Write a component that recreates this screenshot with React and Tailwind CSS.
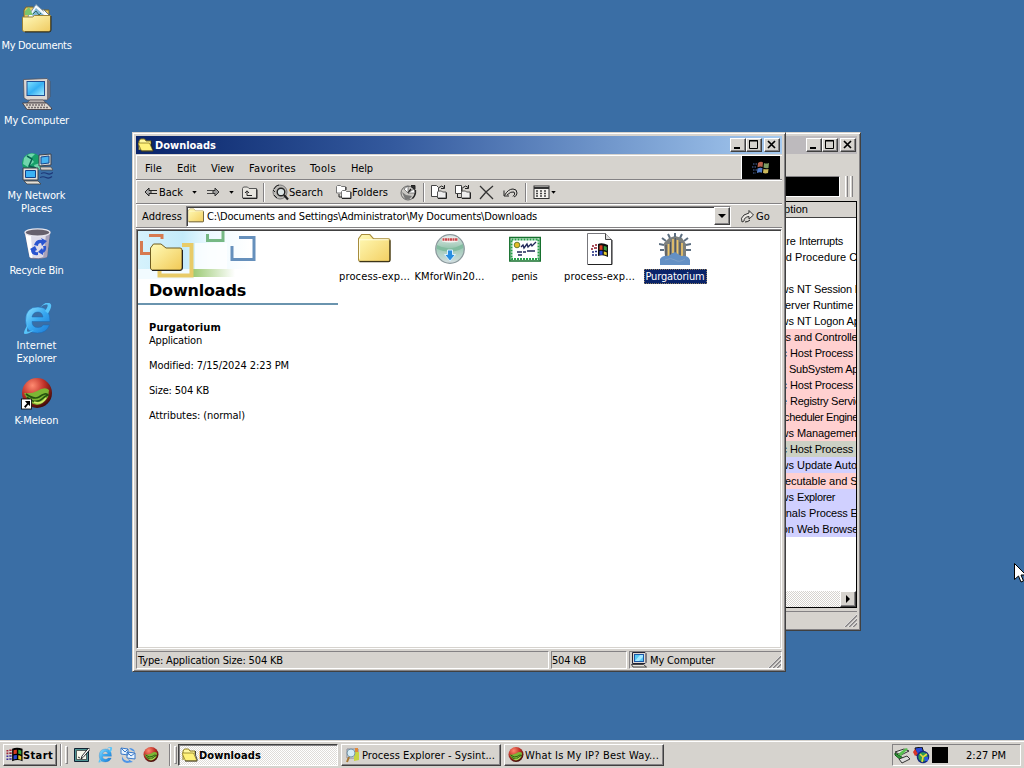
import React, { useLayoutEffect, useRef, useState } from "react";

/* Text run spaced so that it fills a given width, like a bitmap UI font. */
function Fit({ w, children, className = "" }) {
  const ref = useRef(null);
  const [ls, setLs] = useState(0);
  useLayoutEffect(() => {
    const natural = ref.current.getBoundingClientRect().width;
    setLs((w - natural) / children.length);
  }, []);
  return (
    <span ref={ref} className={"inline-block w-fit shrink-0 whitespace-pre " + className} style={{ letterSpacing: ls + "px" }}>
      {children}
    </span>
  );
}

const raised = "border border-t-white border-l-white border-r-[#404040] border-b-[#404040] bg-[#d6d3ce] shadow-[inset_-1px_-1px_0_#848284]";
const sunken = "border border-t-[#848284] border-l-[#848284] border-r-white border-b-white";

/* ---------- icons ---------- */
function Folder({ className }) {
  return (
    <svg viewBox="0 0 32 32" className={className}>
      <defs>
        <linearGradient id="fold" x1="0" y1="0" x2="1" y2="1">
          <stop offset="0" stopColor="#fffbb8" />
          <stop offset="1" stopColor="#f3cf62" />
        </linearGradient>
      </defs>
      <path d="M.5 26V5.500l3-4h8l3.500 4h14.500a1.500 1.500 0 0 1 1.500 1.500V26a1.500 1.500 0 0 1-1.500 1.500H2A1.500 1.500 0 0 1 .5 26z" fill="url(#fold)" stroke="#a78c3c" />
      <path d="M31 7v19.500q0 1.200-1.500 1.200H1.500" fill="none" stroke="#3c3418" strokeWidth="1.200" />
      <path d="M1.500 25V6.500h28" fill="none" stroke="#fffde0" />
    </svg>
  );
}

function OpenFolder({ className }) {
  return (
    <svg viewBox="0 0 16 16" className={className}>
      <path d="M1 13V4l1.500-2h4l1.500 2h5v3" fill="#fff8a0" stroke="#8c7a20" />
      <path d="M0 6h11.500l3.500 8H3.500z" fill="#fff27a" stroke="#8c7a20" strokeWidth=".8" />
      <path d="M15 14H3M13.500 4v4l2 5.500" fill="none" stroke="#222" strokeWidth=".8" />
    </svg>
  );
}

function Documents() {
  return (
    <svg viewBox="0 0 32 32" className="size-8">
      <path d="M3 26V7l2-3h7l2 3h14v19z" fill="#e7c65c" stroke="#75642c" />
      <path d="M7 13l8-11.500L27 12l-3 7H9z" fill="#f4fafe" stroke="#7c94a8" />
      <path d="M11 11l4-6 8 7-2 3h-9z" fill="#82b6d8" />
      <path d="M12 11l3-3 3 4 2-2" stroke="#2e6d60" fill="none" />
      <path d="M22 6l8 8-4 4" fill="#fff" stroke="#678" />
      <path d="M4 8l4-4 4 8H4z" fill="#7cc46c" />
      <path d="M1.500 14h10l2-1.500h16V27q0 1.500-2 1.500H3.500q-2 0-2-1.500z" fill="url(#fold2)" stroke="#9b8338" />
      <path d="M30 13v14q0 2-2 2H4" fill="none" stroke="#2e2a18" />
      <defs>
        <linearGradient id="fold2" x1="0" y1="0" x2="1" y2="1">
          <stop offset="0" stopColor="#fffabc" />
          <stop offset="1" stopColor="#efca60" />
        </linearGradient>
      </defs>
    </svg>
  );
}

function Computer({ className = "size-8" }) {
  return (
    <svg viewBox="0 0 32 32" className={className}>
      <defs>
        <linearGradient id="scr" x1="0" y1="0" x2="1" y2="1">
          <stop offset="0" stopColor="#7fe0ff" />
          <stop offset=".5" stopColor="#35b0f4" />
          <stop offset="1" stopColor="#a2ecff" />
        </linearGradient>
      </defs>
      <path d="M2.500 1.500L26 .5l3 3V19l-3 3H6l-3-2z" fill="#dcd8d4" stroke="#50505a" strokeWidth=".8" />
      <path d="M26 1l3 2.500V19l-3 3z" fill="#77727a" />
      <rect x="5.500" y="3" width="18.500" height="15" fill="#204f94" />
      <rect x="6.500" y="4" width="16.500" height="13" fill="url(#scr)" />
      <path d="M9 22h13l3 3H6z" fill="#b6b0ae" stroke="#514b50" strokeWidth=".6" />
      <path d="M1.500 25h24l5 5v1.500H6z" fill="#ddd7ce" stroke="#443d42" strokeWidth=".9" />
      <path d="M5 27h19M7 29.500h20" stroke="#756e70" strokeWidth="1.300" strokeDasharray="2 1" />
    </svg>
  );
}

function SmallComputer() {
  return (
    <svg viewBox="0 0 16 16" className="size-4 shrink-0">
      <path d="M1.500.5h12.500l1 1v9l-1 1h-12.500z" fill="#dcd8d4" stroke="#223" />
      <rect x="3" y="2" width="10" height="8" fill="#1b58a8" />
      <rect x="4" y="3" width="8" height="6" fill="#58c8f4" />
      <path d="M4 9l5-6h3v2L8 9z" fill="#a4e8ff" />
      <path d="M.5 12.500h12l3 2.500H2z" fill="#e8e4dc" stroke="#222" strokeWidth=".8" />
    </svg>
  );
}

function Network() {
  return (
    <svg viewBox="0 0 32 32" className="size-8">
      <circle cx="11" cy="10" r="10" fill="#17a06a" />
      <path d="M3 5q5-6 11-4l-4 4 3 4-6 5-5-3zM13 12l6-2v6l-4 3z" fill="#70d6ac" />
      <path d="M6 3l5 3-3 7 7 2" stroke="#086050" strokeWidth="1.500" fill="none" />
      <path d="M18 2l12-1v11l-12 1z" fill="#dcd9d3" stroke="#3d4350" />
      <path d="M20 4l8-1v7l-8 1z" fill="#47b3f1" stroke="#14468c" />
      <path d="M19 14h11l2 3H20z" fill="#d5d0ca" stroke="#444" strokeWidth=".7" />
      <path d="M20 20.500q3-1.500 6 0t6-1M19 24.500q3-1.500 6 0t6-1" fill="none" stroke="#1d3878" strokeWidth="1.200" />
      <path d="M2 15h15v12H2z" fill="#e2deda" stroke="#3d3e48" />
      <path d="M4.500 17.500h10v7h-10z" fill="#3cb2f6" stroke="#12448c" />
      <path d="M3 28h14l3 3H6z" fill="#e5e0d8" stroke="#444" strokeWidth=".8" />
    </svg>
  );
}

function Bin() {
  return (
    <svg viewBox="0 0 32 32" className="size-8">
      <path d="M4 4.500q11 5 25-1L26 29q-8 3-17 1z" fill="#dedbe8" stroke="#6a6680" strokeWidth=".8" />
      <path d="M4 5l4.500 24q1 1 3 1L10 8z" fill="#fff" />
      <path d="M25 6.500l4-3L26 29l-4 1.200z" fill="#a8a2ba" />
      <ellipse cx="16.500" cy="4.500" rx="12.500" ry="3.600" fill="#66606c" stroke="#e8e6ee" strokeWidth="1.300" />
      <path d="M13 17q2-6 8-5l-1-2 6 3-5 5-1-3q-3 0-3 3zM25 18q1 5-3 7v2l-5-3 4-4 1 2q1-2 0-4zM17 27q-7 1-7-5l-1-1 5-3 2 4-2 1q1 2 3 1z" fill="#2a55d0" />
    </svg>
  );
}

function IE({ className }) {
  return (
    <svg viewBox="0 0 32 32" className={className}>
      <defs>
        <linearGradient id="ie" x1="0" y1="0" x2="1" y2="1">
          <stop offset="0" stopColor="#8ce0ff" />
          <stop offset=".5" stopColor="#38a8f0" />
          <stop offset="1" stopColor="#1b78d4" />
        </linearGradient>
      </defs>
      <path d="M29 18.500H11q0 6 6 6 4 0 5-2.500h6.500q-3 8-12 8-12 0-12-12.500Q4.500 4 17 4q12 0 12 14.500zM11 14h11q-1-5-5-5-5 0-6 5z" fill="url(#ie)" fillRule="evenodd" stroke="#1a68b4" strokeWidth=".5" />
      <path d="M7 21Q1 31 4 31q4 0 9-4-7 3-7 1 0-2 1-7zM24 8q4-6 2-6.500-3-.5-7 3 7-8 11-3 1 3-3 9z" fill="#57c4fa" />
    </svg>
  );
}

function KMeleon({ className, shortcut }) {
  return (
    <svg viewBox="0 0 32 32" className={className}>
      <defs>
        <radialGradient id="km" cx=".35" cy=".25" r=".8">
          <stop offset="0" stopColor="#ff8a70" />
          <stop offset=".5" stopColor="#c03028" />
          <stop offset="1" stopColor="#380806" />
        </radialGradient>
      </defs>
      <circle cx="16" cy="15" r="15" fill="url(#km)" />
      <path d="M3 15q8 1 13-2 8-5 12-1l-1 7q-4 7-11 8-8-1-13-12z" fill="#7cb634" />
      <path d="M5 16q8 6 13 3 7-5 9-2-3 1-6 4t-9 2q-4-1-6-4" fill="none" stroke="#24520f" strokeWidth="1.700" />
      <path d="M13 24q7 3 12-4" stroke="#d4ec68" fill="none" strokeWidth="1.500" />
      {shortcut && (
        <g>
          <rect x=".5" y="21" width="10" height="10" fill="#fff" stroke="#000" strokeWidth=".8" />
          <path d="M4 23h5v5l-1.800-1.600L4.500 30 3 28.500l3-3z" fill="#000" />
        </g>
      )}
    </svg>
  );
}

function WinFlag({ className }) {
  return (
    <svg viewBox="0 0 18 16" className={className}>
      <path d="M6.500 1.500q5-2.500 11 0v13q-5-2.500-11 0z" fill="#000" />
      <path d="M8 3q1.700-.9 3.500-.6v4.300q-1.800-.3-3.500.5z" fill="#d83a20" />
      <path d="M13 2.500q1.700.2 3.200 1v4.300q-1.500-.8-3.200-1z" fill="#3aa83c" />
      <path d="M8 8.500q1.700-.8 3.500-.5v4.300q-1.800-.3-3.500.4z" fill="#2c48d0" />
      <path d="M13 8.200q1.700.2 3.200 1v4.200q-1.500-.8-3.200-1z" fill="#e0c020" />
      <path d="M.5 3.500h2M3.500 3h2.500M.5 6.300h2M3.500 6h2.500" stroke="#a02838" strokeWidth="1.700" />
      <path d="M.5 9.300h2M3.500 9h2.500M.5 12.500h2M3.500 12.300h2.500" stroke="#3c2c9c" strokeWidth="1.700" />
    </svg>
  );
}

function Cd() {
  return (
    <svg viewBox="0 0 32 32" className="size-8">
      <defs>
        <linearGradient id="cd" x1="0" y1="0" x2="0" y2="1">
          <stop offset="0" stopColor="#e6ecec" />
          <stop offset=".45" stopColor="#9cc8b4" />
          <stop offset="1" stopColor="#d5dfe2" />
        </linearGradient>
      </defs>
      <circle cx="16" cy="16" r="14.300" fill="url(#cd)" stroke="#8a989c" strokeWidth="1.200" />
      <path d="M3 12q12 7 26-1v4q-12 7-26 1z" fill="#82bca0" />
      <path d="M8 4.500h16v4q-8 2-16 0z" fill="#f6f2f0" />
      <path d="M8.500 6.500h15.500" stroke="#c8484c" strokeWidth="2.400" strokeDasharray="2 .5" />
      <path d="M13.500 17h5v4.500h3L16 28l-5.500-6.500h3z" fill="#278de0" stroke="#d8f0ff" />
    </svg>
  );
}

function Certificate() {
  return (
    <svg viewBox="0 0 32 32" className="size-8">
      <rect x=".8" y="4.500" width="30.500" height="23.500" fill="#eaf8ec" stroke="#16702e" strokeWidth="1.500" />
      <rect x="2.500" y="6.500" width="27" height="19.500" fill="#fff" stroke="#28a04a" strokeWidth="2" strokeDasharray="2 1" />
      <circle cx="8" cy="12" r="2.800" fill="#e4bc28" stroke="#4b6820" strokeWidth=".8" />
      <path d="M12 14l2-2 1 3 3-4 1 3 3-3 1 2 4-4M8 19h5M14 19h3M18 18h8M9 22h4" stroke="#202858" fill="none" strokeWidth="1.300" />
    </svg>
  );
}

function ExeDoc() {
  return (
    <svg viewBox="0 0 32 32" className="size-8">
      <path d="M3.500 .5h18l6 6v25h-24z" fill="#fff" stroke="#77777c" />
      <path d="M28 7v24.500H4" fill="none" stroke="#222" />
      <path d="M21.500.5v6h6" fill="#ddd" stroke="#444" />
      <path d="M14 11q4-2 10 1v12q-5-3-10-1z" fill="#111" />
      <path d="M15.500 12.500q1.500-.5 3 0V17q-1.500-.5-3 0z" fill="#e04020" />
      <path d="M19.800 13q1.500.2 3 1v4q-1.500-.8-3-1z" fill="#38a040" />
      <path d="M15.500 18q1.500-.5 3 0v4q-1.500-.5-3 0z" fill="#2848d8" />
      <path d="M19.800 18.500q1.500.2 3 1v3q-1.500-.8-3-1z" fill="#e8d030" />
      <path d="M8 13h2M11 12h2M7 16h2M10 15h3" stroke="#901828" strokeWidth="1.600" />
      <path d="M8 19h2M11 18.500h2M8 22h2M11 22h2" stroke="#1c2880" strokeWidth="1.600" />
    </svg>
  );
}

function Purg() {
  return (
    <svg viewBox="0 0 32 32" className="size-8">
      <path d="M6 24L5 10l5-5 6-2 7 2 4 6v13z" fill="#7c7f7c" />
      <path d="M16 4V0M11 5L9 1M21 5l2-4M7 8L3 5M25 8l4-3M5 12l-5-1M27 12l5-1M5 17H1M27 17h5" stroke="#5c6e80" strokeWidth="2" />
      <path d="M9.500 23V11M14 20V6M18.500 22V7M23 23V10" stroke="#ecc468" strokeWidth="1.700" />
      <path d="M11.500 23V9M16.300 22V5M21 22V9M7 23V12" stroke="#4c5058" strokeWidth="1" />
      <path d="M1 32v-6q3-4 8-3l7-4 6 4q7-1 9 4v5z" fill="#6490c4" />
      <path d="M6 27q6-3 10 0t10-1" stroke="#7c9fc8" fill="none" />
    </svg>
  );
}

const ti = "size-[17px] shrink-0";
const line = { fill: "none", stroke: "#222", strokeWidth: 1 };
const BackArrow = () => (
  <svg viewBox="0 0 14 12" className="h-3 w-3.5 shrink-0">
    <path d="M1 6l4-4v2.500h2v3H5V10z" fill="#aaa" stroke="#222" />
    <path d="M7 4.500h6M7 7.500h6" stroke="#222" />
  </svg>
);
const FwdArrow = () => (
  <svg viewBox="0 0 14 12" className="h-3 w-3.5 shrink-0">
    <path d="M13 6L9 2v2.500H7v3h2V10z" fill="#999" stroke="#333" />
    <path d="M1 4.500h6M1 7.500h6" stroke="#444" />
  </svg>
);
const Caret = () => (
  <svg viewBox="0 0 6 4" className="h-[3px] w-[5px] shrink-0"><path d="M0 0h6L3 3.500z" fill="#000" /></svg>
);
const UpIcon = () => (
  <svg viewBox="0 0 17 17" className={ti}>
    <path d="M1.500 14V4.500l1-1.500h4L8 4.500h7.500V14z" fill="#e8e6e0" stroke="#555" />
    <path d="M16 5.500v9H2" {...line} />
    <path d="M6 7.500V11.500h5M4 9l2-2.200L8 9" {...line} />
  </svg>
);
const SearchIcon = () => (
  <svg viewBox="0 0 17 17" className={ti}>
    <circle cx="8" cy="8" r="7" fill="#bcbab6" stroke="#777" />
    <path d="M2 5q2-4 5-4M2 11l3 3M3 8l-2-2" {...line} />
    <circle cx="9" cy="8" r="3.800" fill="#dce4e4" stroke="#222" strokeWidth="1.400" />
    <path d="M12 11l4 4.500" stroke="#222" strokeWidth="2.200" />
  </svg>
);
const FoldersIcon = () => (
  <svg viewBox="0 0 17 17" className={ti}>
    <path d="M1.500 9V2.500l1-1h3l1 1h4V9z" fill="#fff" stroke="#777" />
    <path d="M6.500 14V7.500l1-1h3l1 1h4V14z" fill="#fff" stroke="#777" />
    <path d="M16 8v6.500H7M4 10v3h3M11 3v3" {...line} />
  </svg>
);
const HistoryIcon = () => (
  <svg viewBox="0 0 17 17" className={ti}>
    <circle cx="8" cy="9" r="7" fill="#c9c7c3" stroke="#666" />
    <path d="M2 8l4 3 6 1-3 3.500-4-.5z" fill="#777" />
    <path d="M15.500 6q.5 5-3 8.500M8 9l3-4" stroke="#222" strokeWidth="1.300" fill="none" />
    <path d="M8 9L4 5l4-3zM8 9l6-4 1 4z" fill="#fff" stroke="#444" strokeWidth=".6" />
    <path d="M11 1.500h4v4l-4-3" fill="#333" stroke="#222" />
  </svg>
);
const MoveIcon = ({ copy }) => (
  <svg viewBox="0 0 17 17" className={ti}>
    <path d={copy ? "M1.500 1.500h6v8h-6z" : "M1.500 1.500h5l2 2v9h-7z"} fill="#fff" stroke="#444" />
    <path d="M7.500 14V8l1-1h3l1 1h3.500v6z" fill="#eee" stroke="#555" />
    <path d="M16.500 8.500v6H8M9 3.500q3-3 5 0M14.500 1v3.500H11" {...line} />
    {copy && <path d="M3.500 10v3.500H7M8 3v4" {...line} />}
  </svg>
);
const DeleteIcon = () => (
  <svg viewBox="0 0 17 17" className={ti}><path d="M2 2l5 5 8 8M15 2L8 8l-6 7" stroke="#333" strokeWidth="1.300" fill="none" /></svg>
);
const UndoIcon = () => (
  <svg viewBox="0 0 17 17" className={ti}>
    <path d="M2 12V6.500M2 12h5M2.500 11.500Q6 5 11 5q4 0 4 4 0 3-3 4M5 11q4-4 7-3 2 2-1 4.500" {...line} />
  </svg>
);
const ViewsIcon = () => (
  <svg viewBox="0 0 17 17" className={ti}>
    <rect x="1" y="2" width="15" height="12.500" fill="#f4f2ee" stroke="#333" />
    <path d="M1 4h15" stroke="#333" strokeWidth="2" />
    <path d="M3 7h12M3 9.500h12M3 12h12" stroke="#444" strokeWidth="1.300" strokeDasharray="2 2" />
  </svg>
);
const GoIcon = () => (
  <svg viewBox="0 0 16 16" className="size-4 shrink-0">
    <path d="M2 14q-2-4 2-7l5-2V2.500L13.500 7 9 11V8.500Q4 9 4 13z" fill="#ece9e4" stroke="#333" />
    <path d="M5 14q3 0 5-2" {...line} />
  </svg>
);

function WinBtn({ kind }) {
  return (
    <div className={"h-3.5 w-4 " + raised}>
      <svg viewBox="0 0 14 12" className="h-3 w-3.5">
        {kind === "min" && <path d="M3 9h6" stroke="#000" strokeWidth="2" />}
        {kind === "max" && <path d="M2.500 1.500h8v8h-8zM2 2h9" fill="none" stroke="#000" />}
        {kind === "x" && <path d="M3 2l7 7M10 2l-7 7" stroke="#000" strokeWidth="1.700" />}
      </svg>
    </div>
  );
}

const WinBtns = () => (
  <div className="flex">
    <WinBtn kind="min" />
    <WinBtn kind="max" />
    <div className="w-0.5" />
    <WinBtn kind="x" />
  </div>
);

const frame = "border border-t-[#d6d3ce] border-l-[#d6d3ce] border-r-[#404040] border-b-[#404040] bg-[#d6d3ce] shadow-[inset_1px_1px_0_#fff,inset_-1px_-1px_0_#848284]";
const Sep = ({ className }) => <div className={"h-[19px] w-0.5 shrink-0 border-l border-l-[#848284] border-r border-r-white " + className} />;
const HSep = () => <div className="h-0.5 shrink-0 border-t border-t-[#848284] border-b border-b-white" />;
const Grip = () => (
  <svg viewBox="0 0 13 13" className="size-[13px] shrink-0">
    <path d="M1 13L13 1M5 13l8-8M9 13l4-4" stroke="#848284" strokeWidth="1.600" />
    <path d="M0 13L13 0M4 13l9-9M8 13l5-5" stroke="#fff" strokeWidth=".6" />
  </svg>
);

/* ---------- background window ---------- */
const pink = "bg-[#ffd0d0]";
const lav = "bg-[#d0d0ff]";
const rows = [
  ["are ", "Interrupts", 799, 44, ""],
  ["d ", "Procedure Calls", 795, 79, ""],
  ["", "", 795, 0, ""],
  ["ws ", "NT Session Manager", 797, 100, ""],
  ["erver ", "Runtime Process", 813, 82, ""],
  ["ws ", "NT Logon Application", 797, 102, ""],
  ["s ", "and Controller", 794, 67, pink],
  ["c ", "Host Process", 790, 63, pink],
  ["r ", "SubSystem App", 789, 75, pink],
  ["c ", "Host Process", 790, 63, pink],
  ["e ", "Registry Service", 790, 76, pink],
  ["", "cheduler Engine", 784, 74, pink],
  ["ws ", "Management", 797, 63, pink],
  ["c ", "Host Process", 790, 63, "bg-[#ccd0c4]"],
  ["ws ", "Update Auto", 797, 60, lav],
  ["", "ecutable and Sc", 785, 78, pink],
  ["ws ", "Explorer", 797, 38, lav],
  ["rnals ", "Process Ex", 809, 54, lav],
  ["on ", "Web Browser", 797, 65, lav],
];

function BackWindow() {
  return (
    <div className={"absolute left-[700px] top-[132px] flex h-[499px] w-[161px] flex-col p-[3px] " + frame}>
      <div className="flex h-[18px] shrink-0 items-center justify-end bg-[#bdbabd] pr-px"><WinBtns /></div>
      <div className="h-[21px] shrink-0" />
      <div className="flex h-[23px] shrink-0 items-center justify-end">
        <div className={"h-[21px] w-[110px] bg-black " + sunken} />
        <div className="ml-[5px] h-[21px] w-[3px] border-l border-l-white border-r border-r-[#848284]" />
        <div className="ml-0.5 mr-1 h-[21px] w-[3px] border-l border-l-white border-r border-r-[#848284]" />
      </div>
      <div className="mt-[3px] flex h-[407px] shrink-0 flex-col border border-black bg-white font-['Liberation_Sans',sans-serif] text-[11px] text-black">
        <div className="flex h-4 shrink-0 items-center border-b border-b-[#404040] bg-[#d6d3ce] pl-[79px]"><Fit w={24}>ption</Fit></div>
        <div className="h-[15px] shrink-0" />
        {rows.map(([lead, main, x, w, bg], i) => (
          <div key={i} className={"flex h-4 shrink-0 items-center overflow-hidden whitespace-pre " + bg}>
            <span className="shrink-0 text-right" style={{ width: x - 705 }}>{lead}</span>
            {main && <Fit w={w}>{main}</Fit>}
          </div>
        ))}
        <div className="grow" />
        <div className="flex h-4 shrink-0 justify-end bg-[repeating-conic-gradient(#fff_0_25%,#d6d3ce_0_50%)] bg-size-[2px_2px]">
          <div className={"flex w-4 items-center justify-center " + raised}>
            <svg viewBox="0 0 4 8" className="h-2 w-1"><path d="M0 0l4 4-4 4z" /></svg>
          </div>
        </div>
      </div>
      <div className="mt-[3px] flex h-[18px] items-end justify-end border-t border-t-[#848284]"><Grip /></div>
    </div>
  );
}

/* ---------- explorer window ---------- */
const menu = [
  ["File", 17, "ml-2"],
  ["Edit", 19, "ml-[15px]"],
  ["View", 23, "ml-[15px]"],
  ["Favorites", 47, "ml-[15px]"],
  ["Tools", 26, "ml-[14px]"],
  ["Help", 22, "ml-[15px]"],
];

const files = [
  ["process-exp...", 71, <Folder className="size-[33px]" />],
  ["KMforWin20...", 70, <Cd />],
  ["penis", 26, <Certificate />],
  ["process-exp...", 71, <ExeDoc />],
  ["Purgatorium", 59, <Purg />],
];

function Banner() {
  return (
    <svg viewBox="0 0 200 48" className="h-12 w-[200px] shrink-0">
      <defs>
        <linearGradient id="sky" x1="0" y1="0" x2="1" y2="0">
          <stop offset="0" stopColor="#d6f2fc" />
          <stop offset=".4" stopColor="#c4ebfa" />
          <stop offset=".65" stopColor="#eefaff" />
          <stop offset="1" stopColor="#fff" />
        </linearGradient>
        <linearGradient id="grass" x1="0" y1="0" x2="1" y2="0">
          <stop offset="0" stopColor="#9cca74" />
          <stop offset="1" stopColor="#fff" />
        </linearGradient>
        <linearGradient id="bf" x1="0" y1="0" x2="1" y2="1">
          <stop offset="0" stopColor="#fffbb8" />
          <stop offset="1" stopColor="#f1c956" />
        </linearGradient>
      </defs>
      <rect width="112" height="38" fill="url(#sky)" />
      <path d="M0 38h56v10H0z" fill="#f2fbff" />
      <rect x="55" y="38" width="42" height="8" fill="url(#grass)" />
      <rect x="57" y="12" width="32" height="26" fill="#fff" opacity=".75" />
      <path d="M3.500 10v12.500H12M11 4.500h13V8" fill="none" stroke="#d67a50" strokeWidth="3" />
      <path d="M44 14h9.500v30.500h-32V39" fill="none" stroke="#e8cb68" strokeWidth="4" />
      <path d="M69.500 3v6.500h15.500V0" fill="none" stroke="#76b884" strokeWidth="3" />
      <path d="M101 6.500h15v22H94V15" fill="none" stroke="#6690bc" strokeWidth="3" />
      <path d="M12.500 37V17l3-4h7.500l5 4h14q2 0 2 2v18q0 2-2 2h-27.500q-2 0-2-2z" fill="url(#bf)" stroke="#6e5c20" />
      <path d="M44.500 19v18q0 2.500-2.500 2.500H14" fill="none" stroke="#222" />
    </svg>
  );
}

function Explorer() {
  return (
    <div className={"absolute left-[132px] top-[132px] flex h-[540px] w-[654px] flex-col p-[3px] " + frame}>
      <div className="flex h-[18px] shrink-0 items-center bg-linear-to-r from-[#0a246a] via-[#345a9e] via-40% to-[#a6caf0] pl-0.5 pr-0.5 font-bold text-white">
        <OpenFolder className="size-4" />
        <Fit w={61} className="ml-[1px]">Downloads</Fit>
        <div className="ml-auto"><WinBtns /></div>
      </div>
      <div className="mt-px flex h-6 shrink-0 items-center border-t border-t-white border-l border-l-white">
        {menu.map(([t, w, m]) => <Fit key={t} w={w} className={"pt-px " + m}>{t}</Fit>)}
        <div className="ml-auto mr-0.5 flex h-[23px] w-[39px] items-center justify-center border-l border-l-white bg-black">
          <svg viewBox="0 0 18 16" className="h-4 w-[18px]">
            <path d="M6 3q3-2 5-.5L10.500 7q-2-1-5 .3z" fill="#b9624c" />
            <path d="M12 3q2 1 5 0l-.5 5q-3 .6-5-.5z" fill="#7f9e64" />
            <path d="M5.500 8.500q3-1.500 5-.3l-.6 4.500q-2-1-5 .3z" fill="#5580cc" />
            <path d="M11.500 8.700q2 1 5 .2L16 13q-3 1-5-.2z" fill="#ccb95c" />
            <path d="M1 4h4M0 7h5M1 10h4M1 13h3" stroke="#4d6ba8" strokeWidth="1.200" strokeDasharray="1.500 1" />
          </svg>
        </div>
      </div>
      <HSep />
      <div className="flex h-[22px] shrink-0 items-center border-l border-l-white">
        <div className="ml-[7px]"><BackArrow /></div>
        <Fit w={24} className="ml-px">Back</Fit>
        <div className="ml-[9px]"><Caret /></div>
        <div className="ml-[9px]"><FwdArrow /></div>
        <div className="ml-[9px]"><Caret /></div>
        <div className="ml-[7px]"><UpIcon /></div>
        <Sep className="ml-[5px] mr-[7px]" />
        <SearchIcon />
        <Fit w={34} className="mr-3">Search</Fit>
        <FoldersIcon />
        <Fit w={36} className="mr-3">Folders</Fit>
        <HistoryIcon />
        <Sep className="ml-1.5 mr-[5px]" />
        <MoveIcon />
        <div className="w-[7px]" />
        <MoveIcon copy />
        <div className="w-[7px]" />
        <DeleteIcon />
        <div className="w-[7px]" />
        <UndoIcon />
        <Sep className="ml-1.5 mr-1.5" />
        <ViewsIcon />
        <div className="ml-px"><Caret /></div>
      </div>
      <HSep />
      <div className="flex h-[22px] shrink-0 items-center border-l border-l-white">
        <Fit w={40} className="ml-[5px]">Address</Fit>
        <div className="ml-1 flex h-[21px] w-[545px] items-center border border-[#848284] border-r-white border-b-white bg-white shadow-[inset_1px_1px_0_#404040]">
          <Folder className="ml-px size-4" />
          <Fit w={330} className="ml-[3px] pt-px">{"C:\\Documents and Settings\\Administrator\\My Documents\\Downloads"}</Fit>
          <div className={"ml-auto flex h-[18px] w-4 items-center justify-center " + raised}>
            <svg viewBox="0 0 8 4" className="h-1 w-2"><path d="M0 0h8L4 4z" /></svg>
          </div>
        </div>
        <div className="ml-[9px]"><GoIcon /></div>
        <Fit w={14}>Go</Fit>
      </div>
      <div className="h-0.5 shrink-0 border-t border-t-[#848284] border-b border-b-white" />
      <div className="flex h-[420px] shrink-0 border border-t-[#848284] border-l-[#848284] border-r-white border-b-white bg-white pl-px pt-px shadow-[inset_1px_1px_0_#404040,inset_-1px_-1px_0_#d6d3ce]">
        <div className="flex w-[200px] shrink-0 flex-col">
          <Banner />
          <div className="flex h-[26px] items-center border-b-2 border-b-[#6a94ae] pl-[11px] font-['DejaVu_Sans',sans-serif] text-[16px] font-bold leading-none [font-stretch:normal]">
            <Fit w={97}>Downloads</Fit>
          </div>
          <div className="flex flex-col pl-[11px] pt-4 leading-[13px]">
            <Fit w={72} className="font-bold">Purgatorium</Fit>
            <Fit w={53}>Application</Fit>
            <Fit w={140} className="mt-3">Modified: 7/15/2024 2:23 PM</Fit>
            <Fit w={60} className="mt-3">Size: 504 KB</Fit>
            <Fit w={96} className="mt-3">Attributes: (normal)</Fit>
          </div>
        </div>
        <div className="-ml-px flex pt-0.5">
          {files.map(([t, w, icon], i) => (
            <div key={i} className="flex w-[75px] flex-col items-center">
              <div className="flex h-9 items-start">{icon}</div>
              <div className={"flex h-[15px] items-center px-0.5 " + (i === 4 ? "ml-px bg-[#0a246a] text-white outline-1 -outline-offset-1 outline-dotted outline-[#8c7c60]" : "")}>
                <Fit w={w}>{t}</Fit>
              </div>
            </div>
          ))}
        </div>
      </div>
      <div className="mt-0.5 flex h-[18px] shrink-0 gap-0.5">
        <div className={"flex w-[413px] items-center pl-px " + sunken}><Fit w={145}>Type: Application Size: 504 KB</Fit></div>
        <div className={"flex w-[76px] items-center " + sunken}><Fit w={34}>504 KB</Fit></div>
        <div className={"flex grow items-center pl-px " + sunken}>
          <SmallComputer />
          <Fit w={65} className="ml-[3px]">My Computer</Fit>
          <div className="ml-auto self-end"><Grip /></div>
        </div>
      </div>
    </div>
  );
}

/* ---------- desktop ---------- */
const desktopIcons = [
  [<Documents />, [["My Documents", 70]]],
  [<Computer />, [["My Computer", 65]]],
  [<Network />, [["My Network", 58], ["Places", 31]]],
  [<Bin />, [["Recycle Bin", 54]]],
  [<IE className="size-8" />, [["Internet", 40], ["Explorer", 40]]],
  [<KMeleon className="size-8" shortcut />, [["K-Meleon", 44]]],
];

const TaskBtn = ({ icon, children, w, className }) => (
  <div className={"flex h-[22px] shrink-0 items-center pl-[3px] " + className}>
    {icon}
    <Fit w={w} className="ml-px">{children}</Fit>
  </div>
);

const BarSep = () => (
  <div className="flex gap-[3px]">
    <div className="h-[22px] w-0.5 border-l border-l-[#848284] border-r border-r-white" />
    <div className="h-[18px] w-[3px] self-center border border-t-white border-l-white border-r-[#848284] border-b-[#848284]" />
  </div>
);

function Taskbar() {
  return (
    <div className="flex h-7 shrink-0 items-center border-t border-t-[#d6d3ce] bg-[#d6d3ce] pl-[3px] pr-[3px] pt-px shadow-[inset_0_1px_0_#fff]">
      <div className={"flex h-[22px] w-[54px] items-center pl-0.5 font-bold " + raised}>
        <WinFlag className="h-4 w-[17px]" />
        <Fit w={30}>Start</Fit>
      </div>
      <div className="ml-[3px]"><BarSep /></div>
      <div className="ml-1.5 flex gap-[7px]">
        <svg viewBox="0 0 16 16" className="size-4">
          <path d="M.5 1.500h14v13H.5z" fill="#4d9494" stroke="#123" />
          <path d="M2.500 3.500h10v9h-10z" fill="#f8f8ec" stroke="#333" strokeWidth=".7" />
          <path d="M14.500 1L8 9l-1 3 2-1.500L16 2.500z" fill="#fff" stroke="#000" strokeWidth=".8" />
          <path d="M4 10l2 1" fill="none" stroke="#333" />
        </svg>
        <IE className="size-4" />
        <svg viewBox="0 0 16 16" className="size-4">
          <path d="M1 1l7 1v6l-7-1zM7 5l8 1v6l-8-1z" fill="#e8f4ff" stroke="#3878c8" />
          <path d="M2 9q1 5 7 5l-1-2 5 3-6 1Q1 15 2 9zM9 1q5 0 6 4l-2-1-2-1z" fill="#4c94e8" />
          <path d="M1 1l4 4 3-3M7 5l4 4 4-3" fill="none" stroke="#3878c8" />
        </svg>
        <KMeleon className="size-4" />
      </div>
      <div className="ml-[10px]"><BarSep /></div>
      <div className="ml-px flex gap-[3px]">
        <TaskBtn
          w={62}
          className="w-[160px] border border-t-[#404040] border-l-[#404040] border-r-white border-b-white bg-[repeating-conic-gradient(#fff_0_25%,#dfdcd8_0_50%)] bg-size-[2px_2px] font-bold shadow-[inset_1px_1px_0_#848284]"
          icon={<OpenFolder className="size-4" />}
        >
          Downloads
        </TaskBtn>
        <TaskBtn
          w={133}
          className={"w-[160px] " + raised}
          icon={
            <svg viewBox="0 0 16 16" className="size-4">
              <path d="M2 2h11v9H2z" fill="#e8eef0" stroke="#889" />
              <path d="M9 4l5 1v8l-5 1z" fill="#c8d440" />
              <path d="M10 1h3v4h-3z" fill="#e08838" />
              <circle cx="6" cy="6" r="4" fill="#d4ecf8" stroke="#7898a8" />
              <path d="M4 10l-2 5" stroke="#a87830" strokeWidth="2" />
            </svg>
          }
        >
          Process Explorer - Sysint...
        </TaskBtn>
        <TaskBtn w={134} className={"w-[160px] " + raised} icon={<KMeleon className="size-4" />}>
          What Is My IP? Best Way...
        </TaskBtn>
      </div>
      <div className={"ml-auto flex h-[22px] w-[129px] items-center pl-px " + sunken}>
        <svg viewBox="0 0 17 17" className="size-[17px]">
          <path d="M1 5l9-3 5 2-8 4z" fill="#e8e8e4" stroke="#333" />
          <path d="M1 6l10 6-2 3-8-7z" fill="#2da038" stroke="#145018" />
          <path d="M5 12l8-3 3 3-8 4z" fill="#ddd" stroke="#333" />
          <path d="M4 7l8-6 2 1-7 7z" fill="#58c050" />
        </svg>
        <svg viewBox="0 0 17 17" className="ml-0.5 size-[17px]">
          <path d="M2 1l7-1 2 6-7 3z" fill="#2848d8" stroke="#111" />
          <path d="M2 2l3 5-3 2-2-4z" fill="#d83428" />
          <circle cx="10" cy="10" r="5.500" fill="#2a9c50" stroke="#142880" strokeWidth="1.500" />
          <path d="M7 7l3 3 4-3M9 15l1-5" stroke="#e8d840" strokeWidth="1.600" fill="none" />
          <path d="M11 10h4v4h-3z" fill="#3058e0" />
        </svg>
        <div className="ml-0.5 size-4 bg-black" />
        <Fit w={40} className="ml-[18px] pt-px">2:27 PM</Fit>
      </div>
    </div>
  );
}

export default function App() {
  return (
    <div className="relative flex h-[768px] w-[1024px] flex-col overflow-hidden bg-[#3a6ea5] font-['DejaVu_Sans_Condensed','DejaVu_Sans',sans-serif] text-[11px] leading-[13px] text-black [font-stretch:condensed]">
      <div className="grow pt-[3px]">
        <div className="flex w-[73px] flex-col">
          {desktopIcons.map(([icon, lines], i) => (
            <div key={i} className="flex h-[75px] flex-col items-center gap-1 text-white">
              {icon}
              <div className="flex flex-col items-center">
                {lines.map(([t, w]) => <Fit key={t} w={w}>{t}</Fit>)}
              </div>
            </div>
          ))}
        </div>
      </div>
      <Taskbar />
      <BackWindow />
      <Explorer />
      <svg viewBox="0 0 12 20" className="absolute left-[1014px] top-[563px] h-5 w-3">
        <path d="M.5 .5v16l4-3.500 2.500 6 2.500-1-2.500-6h5z" fill="#fff" stroke="#000" />
      </svg>
    </div>
  );
}
